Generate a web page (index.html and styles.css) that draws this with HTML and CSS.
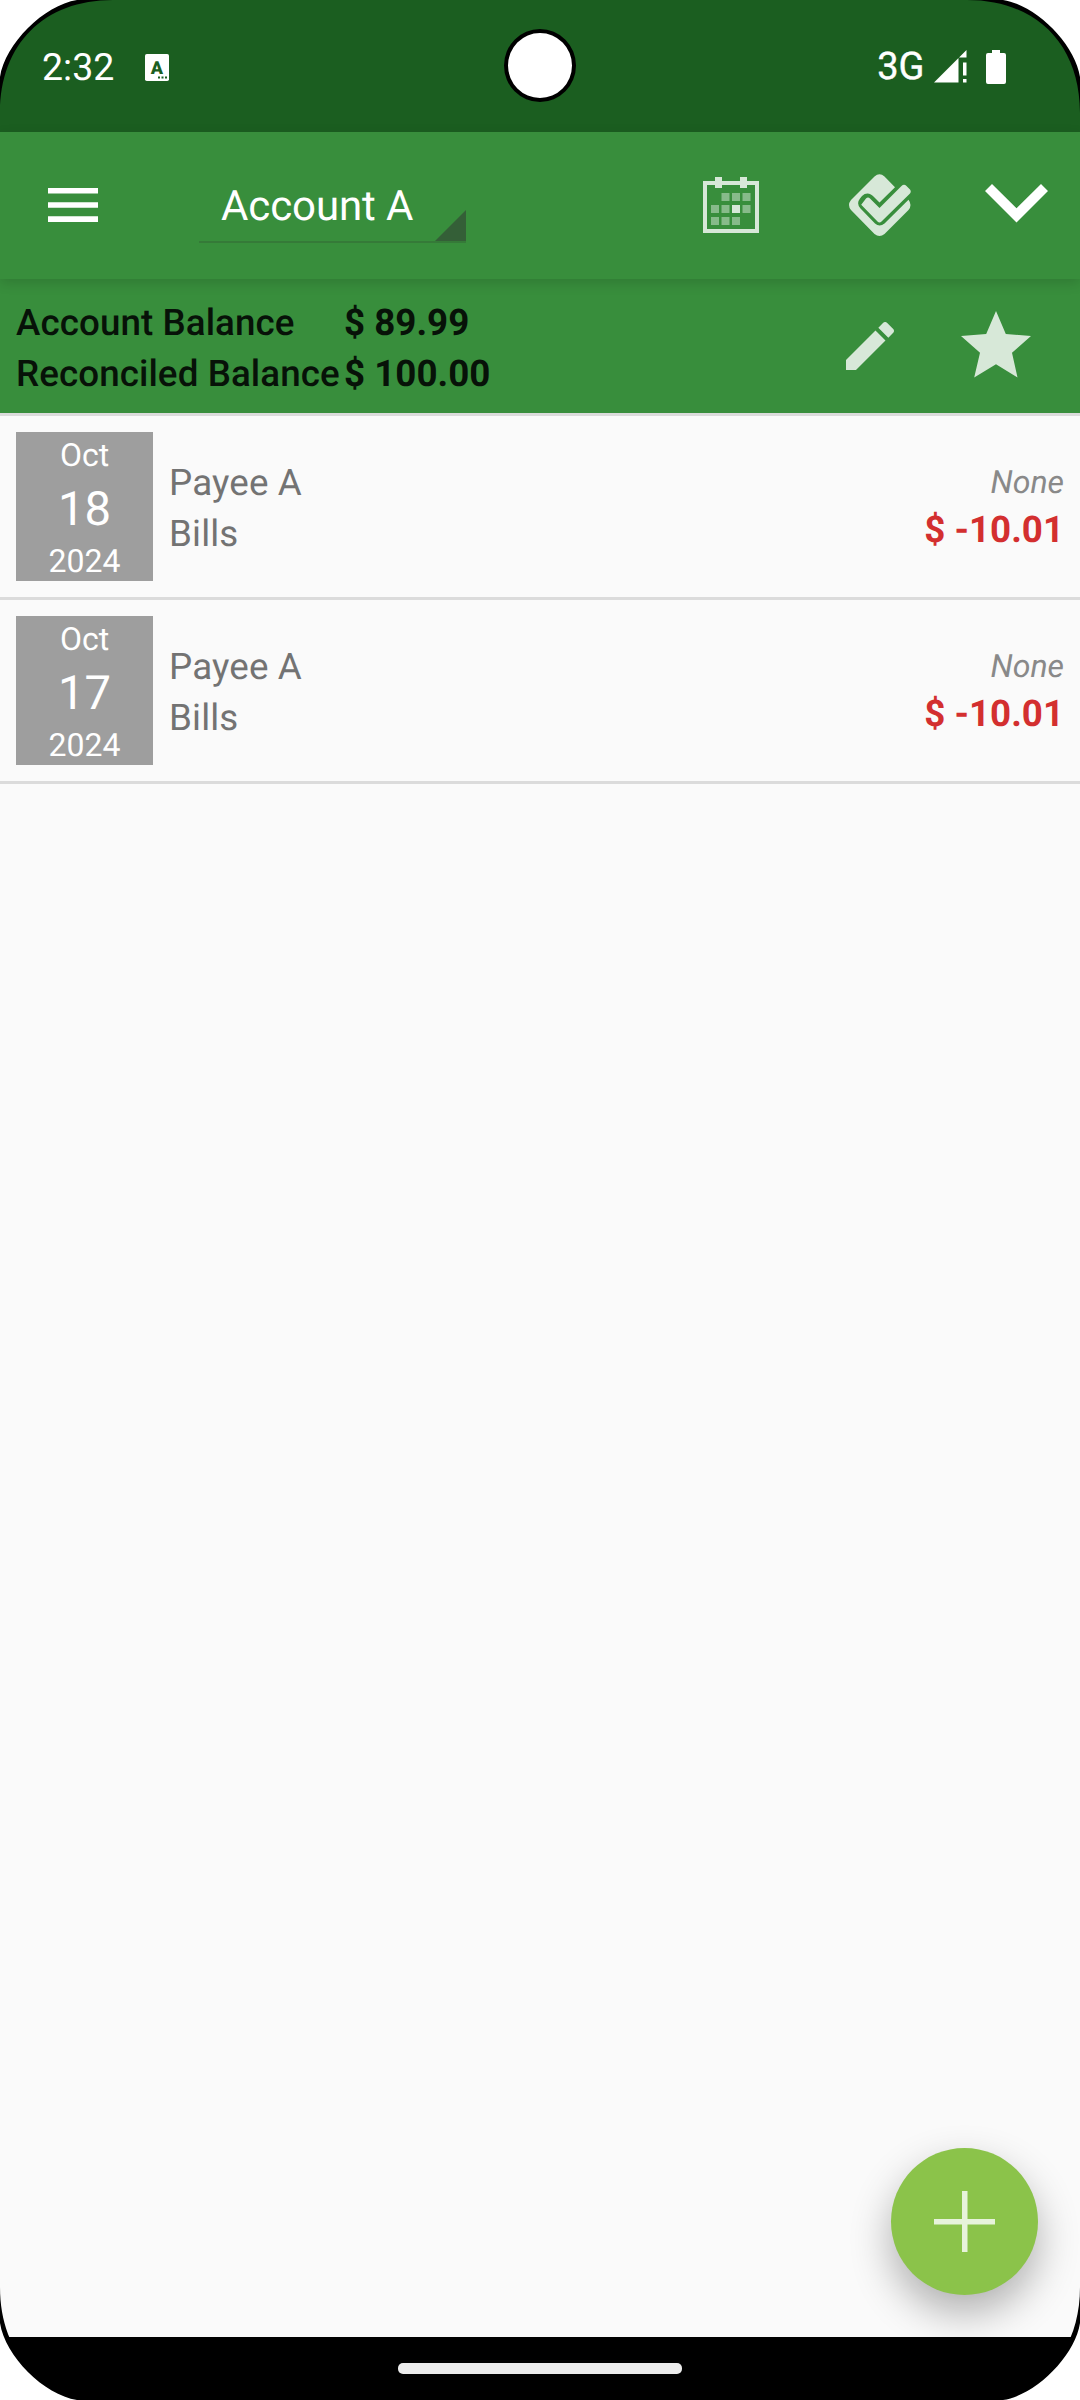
FILE: index.html
```html
<!DOCTYPE html>
<html lang="en">
<head>
<meta charset="utf-8">
<title>Account A</title>
<link rel="stylesheet" href="styles.css">
</head>
<body>
<div class="screen">
  <header class="status">
    <span class="clock">2:32</span>
    <svg class="status-app" width="24" height="27" viewBox="0 0 24 27"><rect width="24" height="27" rx="1.8" fill="#fff"/><text class="status-letter" x="12" y="19.500" text-anchor="middle">A</text><path d="M13 22.500h2v2h-2zM16.500 22.500h2v2h-2zM20 22.500h2v2h-2z" fill="#1b5e20"/></svg>
    <span class="network">3G</span>
    <svg class="signal" width="33" height="33" viewBox="0 0 33 33" fill="#fff"><path d="M0 32.500 24.500 8V32.500zM25 7.500 32.500 0V7.500zM29 12.500h3.500v13H29zM29 29h3.500v3.500H29z"/></svg>
    <svg class="battery" width="20" height="34" viewBox="0 0 20 34" fill="#fff"><path d="M6 0h8v3h4q2 0 2 2v27q0 2-2 2H2q-2 0-2-2V5q0-2 2-2h4z"/></svg>
    <span class="camera"></span>
  </header>

  <nav class="toolbar">
    <svg class="menu" width="50" height="34" viewBox="0 0 50 34" fill="#fff"><path d="M0 0h50v5.600H0zM0 14.200h50v5.600H0zM0 28.300h50v5.600H0z"/></svg>
    <div class="spinner"><span>Account A</span><svg class="spinner-corner" width="31" height="31" viewBox="0 0 31 31"><path d="M31 0V31H0z" fill="#345f37"/></svg></div>
    <svg class="calendar" width="56" height="56" viewBox="0 0 56 56" fill="#fff"><g opacity=".8"><path fill-rule="evenodd" d="M0 4h12V0h7v4h18V0h7v4h12v52H0zM4 8v44h48V8h-8v3h-7V8H19v3h-7V8z"/><path d="M29 28h8v8h-8z"/></g><path opacity=".4" d="M18.500 16h8v8h-8zM29 16h8v8h-8zM39.500 16h8v8h-8zM8 28h8v8H8zM18.500 28h8v8h-8zM39.500 28h8v8h-8zM8 40h8v8H8zM18.500 40h8v8h-8zM29 40h8v8h-8z"/></svg>
    <svg class="reconcile" width="62" height="62" viewBox="0 0 62 62" fill="#fff" opacity=".8"><path d="M25.500 2.500Q30.500-2 35.500 2.500L46 13.200 30.500 28.600 25.500 23.500Q19 16.500 13 22L11 24.500Q7 29.500 11.500 34.500L26 49.500Q30.500 53.500 35.500 49.500L59.500 25.700Q63.500 31 59.500 36L35.500 60Q30.500 64 25.500 60L2 36Q-2 31 2 26z"/><path d="M12.200 30.700 17 24.500Q19 22.500 21 24.500L30.500 34 52.500 12Q55 9.500 57.500 12L61 15.500Q62.500 17.500 61 19.500L32.500 47.500Q30.500 49.500 28.500 47.500z"/></svg>
    <svg class="chevron" width="63" height="39" viewBox="0 0 63 39" fill="#fff"><path d="M0 7 7 0 31.500 24.300 56 0 63 7 31.500 38.500z"/></svg>
  </nav>

  <section class="balances">
    <dl class="totals">
      <dt>Account Balance</dt><dd>$ 89.99</dd>
      <dt>Reconciled Balance</dt><dd>$ 100.00</dd>
    </dl>
    <svg class="edit" width="48" height="48" viewBox="3 3 18 18" fill="#fff" opacity=".8"><path d="M3 17.250V21h3.750L17.810 9.940l-3.750-3.750L3 17.250zM20.710 7.040c.39-.39.39-1.020 0-1.410l-2.340-2.340c-.39-.39-1.020-.39-1.410 0l-1.830 1.830 3.750 3.750 1.830-1.830z"/></svg>
    <svg class="star" width="70" height="67" viewBox="0 0 70 67" fill="#fff" opacity=".8"><path d="M35 0 44.800 23 70 25 51 41.700 56.500 66.500 35 53.200 13.200 66.500 19 41.700 0 25 25.200 23z"/></svg>
  </section>

  <main class="list">
    <article class="row">
      <time class="date"><span>Oct</span><b>18</b><span>2024</span></time>
      <div class="details"><span>Payee A</span><span>Bills</span></div>
      <div class="sum"><i>None</i><strong>$ -10.01</strong></div>
    </article>
    <article class="row">
      <time class="date"><span>Oct</span><b>17</b><span>2024</span></time>
      <div class="details"><span>Payee A</span><span>Bills</span></div>
      <div class="sum"><i>None</i><strong>$ -10.01</strong></div>
    </article>
    <button class="add" aria-label="Add transaction"><svg width="61" height="61" viewBox="0 0 61 61" fill="#fff" opacity=".8"><path d="M28 0h5.500v28H61v5.500H33.500V61H28V33.500H0V28h28z"/></svg></button>
  </main>

  <footer class="navbar"><span class="handle"></span></footer>

  <svg class="bezel" width="1080" height="2400" viewBox="0 0 1080 2400">
    <defs><g id="corner"><path d="M0 113C0 44 44 0 113 0H0z"/><path d="M0 77C5 44 44 5 77 0H0z" fill="#fff"/></g></defs>
    <use href="#corner"/>
    <use href="#corner" transform="translate(1080 0) scale(-1 1)"/>
    <use href="#corner" transform="translate(0 2400) scale(1 -1)"/>
    <use href="#corner" transform="translate(1080 2400) scale(-1 -1)"/>
  </svg>
</div>
</body>
</html>
```
FILE: styles.css
```css
* { box-sizing: border-box; }
body { margin: 0; background: #fff; }
svg { display: block; flex: none; }

.screen {
  position: relative;
  display: flex;
  flex-direction: column;
  width: 1080px;
  height: 2400px;
  overflow: hidden;
  background: #fafafa;
  font-family: Roboto, "Liberation Sans", sans-serif;
  font-size: 36.75px;
  line-height: 43px;
  text-rendering: geometricPrecision;
}

/* Status bar */
.status {
  position: relative;
  display: flex;
  align-items: center;
  height: 132px;
  padding: 2px 74px 0 42px;
  background: #1b5e20;
  color: #fff;
}
.clock { width: 103px; padding-top: 3px; font-size: 37.5px; }
.status-letter { fill: #1b5e20; font-size: 18px; font-weight: 900; }
.network { margin-left: auto; font-size: 38px; letter-spacing: -.3px; -webkit-text-stroke: .4px #fff; }
.signal { margin: 0 0 1px 10px; }
.battery { margin-left: 19px; }
.camera {
  position: absolute;
  left: 504px;
  top: 29px;
  width: 72px;
  height: 73px;
  border: 4px solid #000;
  border-radius: 50%;
  background: #fff;
}

/* Toolbar */
.toolbar {
  position: relative;
  z-index: 1;
  display: flex;
  align-items: center;
  height: 147px;
  padding: 0 32.500px 1px 48px;
  background: #388e3c;
  box-shadow: 0 4px 12px rgba(0, 0, 0, .14);
}
.spinner {
  display: flex;
  justify-content: space-between;
  align-items: flex-end;
  width: 267px;
  height: 64px;
  margin: 12px 0 0 101px;
  padding-left: 22px;
  border-bottom: 2px solid #357a38;
  color: #fff;
  font-size: 42px;
  line-height: 49px;
}
.spinner span { padding-bottom: 10px; letter-spacing: -.1px; }
.calendar { margin-left: auto; }
.reconcile { margin-left: 89.500px; }
.chevron { margin: 0 0 3px 74px; }

/* Balance summary */
.balances {
  display: flex;
  align-items: center;
  height: 134px;
  padding: 0 49px 0 16px;
  background: #388e3c;
  color: #071208;
}
.totals {
  display: grid;
  grid-template-columns: 328px auto;
  row-gap: 8px;
  margin: 0;
  padding-top: 3px;
  font-weight: 500;
}
.totals dt { letter-spacing: .08px; white-space: nowrap; }
.totals dd { margin: 0; font-weight: 700; }
.edit { margin-left: auto; }
.star { margin: 0 0 3px 67px; }

/* Transactions */
.list {
  position: relative;
  flex: 1;
  overflow: hidden;
  border-top: 3px solid #dbdbdb;
}
.row {
  display: flex;
  height: 184px;
  padding: 16px;
  border-bottom: 3px solid #dbdbdb;
}
.date {
  display: flex;
  flex-direction: column;
  width: 137px;
  height: 149px;
  background: #9e9e9e;
  color: #fff;
  font-size: 32px;
  line-height: 37px;
  text-align: center;
  padding-top: 5px;
}
.date b { margin: 8px 0 6px; font-size: 47.25px; font-weight: 400; line-height: 55px; }
.details {
  display: flex;
  flex-direction: column;
  gap: 8px;
  padding: 29px 0 0 16px;
  color: #737373;
  letter-spacing: .15px;
}
.sum {
  display: flex;
  flex-direction: column;
  align-items: flex-end;
  gap: 7px;
  margin-left: auto;
  padding-top: 32px;
}
.sum i { color: #898989; font-size: 32px; line-height: 37px; }
.sum strong { color: #d32f2f; font-weight: 700; }

.add {
  position: absolute;
  right: 42px;
  bottom: 42px;
  display: grid;
  place-items: center;
  width: 147px;
  height: 147px;
  padding: 0;
  border: 0;
  border-radius: 50%;
  background: #8bc34a;
  box-shadow: 0 18px 40px rgba(0, 0, 0, .3);
}

/* Gesture navigation */
.navbar {
  display: flex;
  justify-content: center;
  align-items: center;
  height: 63px;
  background: #000;
}
.handle { width: 284px; height: 11px; border-radius: 5px; background: #ececec; }

.bezel { position: absolute; left: 0; top: 0; z-index: 2; pointer-events: none; }
```
